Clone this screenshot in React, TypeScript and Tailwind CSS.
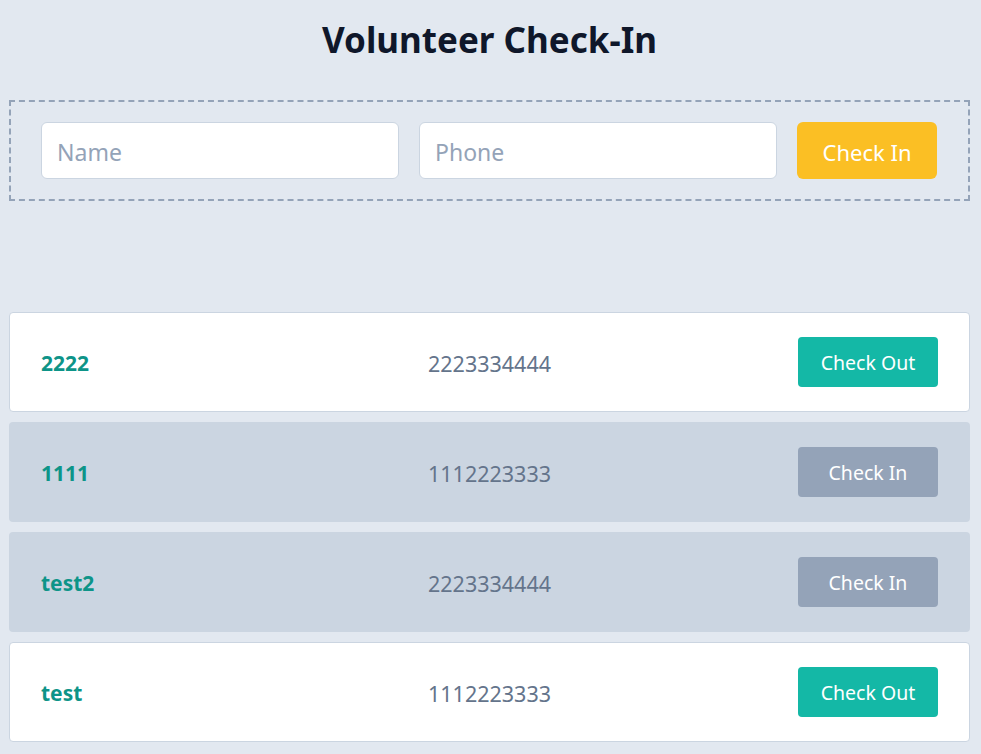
import React from "react";

const rows = [
  { name: "2222", phone: "2223334444", in: true },
  { name: "1111", phone: "1112223333", in: false },
  { name: "test2", phone: "2223334444", in: false },
  { name: "test", phone: "1112223333", in: true },
];

export default function App() {
  return (
    <div
      className="min-h-[754px] bg-[#e2e8f0]"
      style={{ fontFamily: '"Noto Sans", "Open Sans", sans-serif' }}
    >
      <div className="ml-[9px] w-[961px] pt-[14px]">
        <h1 className="text-center text-[35px] leading-[52px] font-bold text-[#0f172a]">
          Volunteer Check-In
        </h1>
        <div className="mt-[34px] flex items-center gap-5 border-2 border-dashed border-[#94a3b8] pl-[30px] pr-[30px] py-5">
          <input
            placeholder="Name"
            className="h-[57px] w-[358px] rounded-md border border-[#cbd5e1] bg-white px-[15px] pt-[3px] text-[23px] text-[#0f172a] placeholder:text-[#94a3b8] outline-none"
          />
          <input
            placeholder="Phone"
            className="h-[57px] w-[358px] rounded-md border border-[#cbd5e1] bg-white px-[15px] pt-[3px] text-[23px] text-[#0f172a] placeholder:text-[#94a3b8] outline-none"
          />
          <button className="h-[57px] w-[140px] rounded-md bg-[#fbbf24] pt-[3px] text-[22px] text-white">
            Check In
          </button>
        </div>
        <div className="mt-[111px] flex flex-col gap-[10px]">
          {rows.map((r, i) => (
            <div
              key={i}
              className={
                r.in
                  ? "grid h-[100px] grid-cols-3 items-center rounded border border-[#cbd5e1] bg-white pl-[31px] pr-[31px]"
                  : "grid h-[100px] grid-cols-3 items-center rounded bg-[#cbd5e1] pl-[32px] pr-[32px]"
              }
            >
              <div className="pt-[4px] text-[21px] font-bold text-[#0d9488]">{r.name}</div>
              <div className="pt-[4px] text-center text-[21.5px] text-[#64748b]">{r.phone}</div>
              <div className="flex justify-end">
                <button
                  className={
                    r.in
                      ? "h-[50px] w-[140px] rounded bg-[#14b8a6] pt-[2px] text-[19.5px] text-white"
                      : "h-[50px] w-[140px] rounded bg-[#94a3b8] pt-[2px] text-[19.5px] text-white"
                  }
                >
                  {r.in ? "Check Out" : "Check In"}
                </button>
              </div>
            </div>
          ))}
        </div>
      </div>
    </div>
  );
}
